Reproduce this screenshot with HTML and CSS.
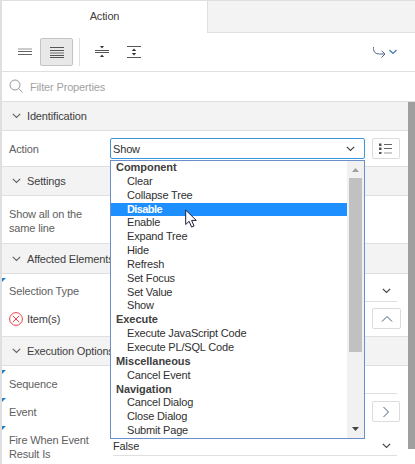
FILE: index.html
```html
<!DOCTYPE html>
<html lang="en">
<head>
<meta charset="utf-8">
<title>Action</title>
<link rel="stylesheet" href="styles.css">
</head>
<body>
<div class="panel">
  <div class="tabs"><div class="tab">Action</div><div class="tab-rest"></div></div>
  <div class="toolbar">
    <div class="tool"><svg width="14" height="12"><path d="M0 5.500h14M0 8.500h14" stroke="#666"/><path d="M0 3h14" stroke="#ccc" stroke-width="2"/></svg></div>
    <div class="tool active"><svg width="14" height="13"><path d="M0 1.500h14M0 4.500h14M0 9.500h14M0 11.500h14" stroke="#555"/><path d="M0 7h14" stroke="#aaa" stroke-width="2"/></svg></div>
    <div class="divider"></div>
    <div class="tool collapse"><svg width="14" height="14"><path d="M0 5.500h14M0 7.500h14" stroke="#555"/><path d="M5 1h4L7 3.500zM5 12h4L7 9.500z" fill="#333"/></svg></div>
    <div class="tool expand"><svg width="14" height="14"><path d="M0 1.500h14M0 12.500h14" stroke="#555"/><path d="M4.800 6h4.400L7 3.500zM4.800 8h4.400L7 10.500z" fill="#333"/></svg></div>
    <div class="go"><svg width="26" height="14" fill="none"><path d="M1.500 1v1.500q0 5.500 6 5.500H13M9.500 4.800L13 8 9.500 11.500" stroke="#536b91"/><path d="M17.500 4l3.500 3.500L24.500 4" stroke="#4477ad" stroke-width="1.200"/></svg></div>
  </div>
  <div class="search"><svg width="15" height="15" fill="none" stroke="#999"><circle cx="6" cy="6" r="5"/><path d="M9.700 9.700l4 3.800"/></svg><span>Filter Properties</span></div>
  <div class="body">
    <div class="props">
      <div class="head h-first"><svg class="chev" viewBox="0 0 9 6"><path d="M.8 .8l3.700 3.700L8.200 .8"/></svg><span>Identification</span></div>
      <div class="row r-action">
        <label>Action</label>
        <div class="select open"><span>Show</span><svg class="chev dark" viewBox="0 0 9 6"><path d="M.8 .8l3.700 3.700L8.200 .8"/></svg>
          <div class="popup">
            <div class="list">
              <div class="group">Component</div>
              <div class="opt">Clear</div>
              <div class="opt">Collapse Tree</div>
              <div class="opt selected">Disable</div>
              <div class="opt">Enable</div>
              <div class="opt">Expand Tree</div>
              <div class="opt">Hide</div>
              <div class="opt">Refresh</div>
              <div class="opt">Set Focus</div>
              <div class="opt short">Set Value</div>
              <div class="opt">Show</div>
              <div class="group">Execute</div>
              <div class="opt">Execute JavaScript Code</div>
              <div class="opt">Execute PL/SQL Code</div>
              <div class="group">Miscellaneous</div>
              <div class="opt">Cancel Event</div>
              <div class="group short">Navigation</div>
              <div class="opt">Cancel Dialog</div>
              <div class="opt">Close Dialog</div>
              <div class="opt">Submit Page</div>
            </div>
            <div class="scroll">
              <svg width="7" height="4"><path d="M0 4L3.500 0 7 4z" fill="#a0a0a0"/></svg>
              <div class="thumb"></div>
              <svg class="down" width="7" height="4"><path d="M0 0h7L3.500 4z" fill="#444"/></svg>
            </div>
          </div>
        </div>
        <div class="btn"><svg width="14" height="12"><path d="M5 1.500h8M5 5.500h8" stroke="#666"/><path d="M5 10h8" stroke="#ccc" stroke-width="2"/><path d="M0 .5h2.500v2.500H0zM0 4.500h2.500v2.500H0zM0 9h2.500v2H0z" fill="#555"/></svg></div>
      </div>
      <div class="head h-set"><svg class="chev" viewBox="0 0 9 6"><path d="M.8 .8l3.700 3.700L8.200 .8"/></svg><span>Settings</span></div>
      <div class="row r-show"><label>Show all on the<br>same line</label></div>
      <div class="head h-aff"><svg class="chev" viewBox="0 0 9 6"><path d="M.8 .8l3.700 3.700L8.200 .8"/></svg><span>Affected Elements</span></div>
      <div class="row r-type changed"><label>Selection Type</label><div class="select"><svg class="chev dark" viewBox="0 0 9 6"><path d="M.8 .8l3.700 3.700L8.200 .8"/></svg></div></div>
      <div class="row r-items">
        <label class="error"><svg width="14" height="14" fill="none" stroke="#ee4048"><circle cx="7" cy="7" r="6.400"/><path d="M3.800 3.800l6.400 6.400M10.200 3.800l-6.400 6.400"/></svg>Item(s)</label>
        <div class="gap"></div>
        <div class="btn wide"><svg width="12" height="8" fill="none" stroke="#465a78"><path d="M1 6.500l5-5 5 5"/></svg></div>
      </div>
      <div class="head h-exec"><svg class="chev" viewBox="0 0 9 6"><path d="M.8 .8l3.700 3.700L8.200 .8"/></svg><span>Execution Options</span></div>
      <div class="row r-seq changed"><label>Sequence</label><div class="select"></div></div>
      <div class="row r-event changed"><label>Event</label><div class="gap"></div><div class="btn"><svg width="8" height="12" fill="none" stroke="#465a78"><path d="M1.500 1l5 5-5 5"/></svg></div></div>
      <div class="row r-fire changed"><label>Fire When Event<br>Result Is</label><div class="select"><span>False</span><svg class="chev dark" viewBox="0 0 9 6"><path d="M.8 .8l3.700 3.700L8.200 .8"/></svg></div></div>
    </div>
    <div class="bar"></div>
  </div>
</div>
<svg class="cursor" width="13" height="20" viewBox="0 0 13 20"><path d="M.7 1v14.500l3.400-3.200 2.500 5.800 2.500-1.100-2.500-5.600h4.700z" fill="#fff" stroke="#1c1c3c"/></svg>
</body>
</html>
```
FILE: styles.css
```css
* { box-sizing: border-box; }
body {
  margin: 0;
  background: #fff;
  color: #404040;
  font: 11px/14px "Liberation Sans", Arial, sans-serif;
  letter-spacing: -.15px;
  overflow: hidden;
}
svg { display: block; flex: none; }
.panel {
  width: 415px;
  height: 464px;
  display: flex;
  flex-direction: column;
  border-left: 2px solid #dfdfdf;
  border-top: 1px solid #dfdfdf;
}
.tabs { display: flex; height: 32px; flex: none; }
.tab { width: 205px; padding: 8px 0 0; text-align: center; }
.tab-rest { flex: 1; background: #f3f3f3; border: solid #dfdfdf; border-width: 0 0 1px 1px; }
.toolbar { display: flex; align-items: flex-start; height: 39px; flex: none; padding: 5px 0 0 6px; border-bottom: 1px solid #dfdfdf; }
.tool { width: 33px; height: 28px; display: flex; align-items: center; justify-content: center; border: 1px solid transparent; border-radius: 2px; }
.tool.active { background: #e8e8e8; border-color: #c4c4c4; }
.tool:first-child { width: 32px; padding-left: 2px; }
.divider { width: 1px; height: 28px; margin-left: 6px; background: #dfdfdf; }
.collapse { margin-left: 5px; }
.expand { margin-left: -1px; }
.go { margin: 8px 0 0 auto; padding-right: 17px; }
.search { display: flex; align-items: center; height: 30px; flex: none; padding-left: 7px; border-bottom: 1px solid #dfdfdf; color: #a2a2a2; }
.search span { margin-left: 6px; }
.body { display: flex; flex: 1; min-height: 0; }
.props { width: 406px; }
.bar { width: 7px; height: 347px; background: #9f9f9f; }
.head { display: flex; align-items: center; padding-left: 10px; background: #f3f3f3; border-bottom: 1px solid #dfdfdf; }
.head span { margin-left: 6px; }
.chev { width: 9px; height: 6px; fill: none; stroke: #666; stroke-width: 1.2; }
.dark { stroke: #444; margin-left: auto; }
.h-first { height: 29px; }
.h-set { height: 29px; }
.h-aff { height: 30px; }
.h-exec { height: 29px; }
.row { position: relative; display: flex; }
.row label { width: 108px; padding-left: 7px; color: #606060; white-space: nowrap; }
.changed::before { content: ""; position: absolute; left: 0; top: 4px; border-left: 4px solid #2b7fc3; border-bottom: 4px solid transparent; }
.select { position: relative; display: flex; align-items: center; width: 284px; margin-left: 3px; padding: 0 6px 0 0; border-bottom: 1px solid #dfdfdf; color: #303030; }
.gap { width: 262px; }
.btn { display: flex; align-items: center; justify-content: center; width: 28px; height: 21px; border: 1px solid #dcdcdc; border-radius: 2px; background: #fff; }
.btn.wide { width: 29px; }
.select.open { width: 255px; height: 21px; margin: 0 7px 0 0; padding: 0 9px 0 2px; border: 1px solid #3c96db; border-radius: 2px; }
.r-action { height: 36px; padding-top: 7px; border-bottom: 1px solid #dfdfdf; }
.r-action > label { padding-top: 4px; }
.r-show { height: 48px; padding-top: 11px; border-bottom: 1px solid #dfdfdf; }
.r-type { height: 28px; }
.r-type label { padding-top: 10px; }
.r-type .select { padding-top: 6px; }
.r-items { height: 35px; padding-top: 6px; border-bottom: 1px solid #dfdfdf; }
.r-items .error { display: flex; align-items: center; height: 21px; gap: 4px; color: #404040; }
.r-seq { height: 28px; }
.r-seq label { padding-top: 11px; }
.r-event { height: 28px; }
.r-event label { padding-top: 11px; }
.r-event .btn { margin-top: 7px; }
.r-fire { height: 34px; }
.r-fire label { padding-top: 11px; }
.r-fire .select { padding-top: 14px; }
.popup { position: absolute; z-index: 2; left: -1px; top: 21px; width: 255px; height: 279px; display: flex; border: 1px solid #6b8fcb; background: #fff; }
.list { flex: 1; }
.list > div { height: 14px; line-height: 13px; white-space: nowrap; }
.list > .short { height: 13px; }
.group { padding-left: 5px; font-weight: bold; color: #404040; letter-spacing: -.05px; }
.opt { padding-left: 16px; letter-spacing: -.18px; }
.list > .selected { height: 13px; background: #1e8fff; color: #fff; font-weight: bold; letter-spacing: -.6px; }
.scroll { display: flex; flex-direction: column; align-items: center; width: 17px; padding: 7px 0; background: #f1f1f1; }
.thumb { width: 13px; height: 174px; margin-top: 6px; background: #c1c1c1; }
.down { margin-top: auto; }
.cursor { position: absolute; left: 185px; top: 209px; z-index: 3; }
```
